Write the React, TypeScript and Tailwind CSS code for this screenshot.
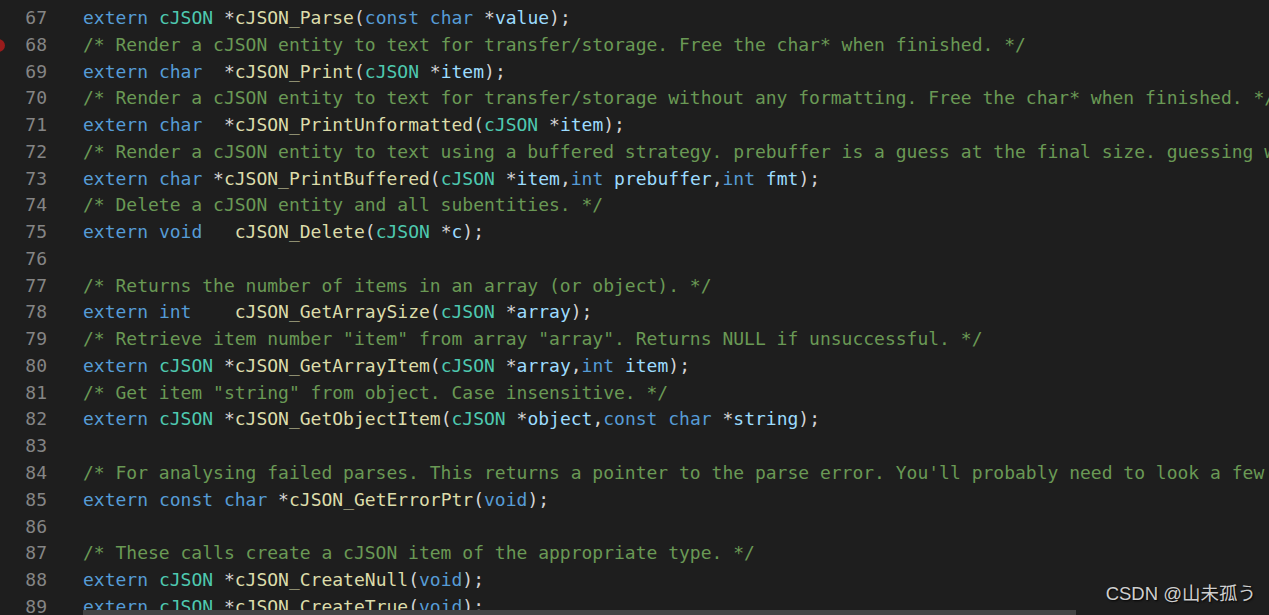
import React from "react";

type Tok = [string, string];

const K = "text-[#569cd6]";
const T = "text-[#4ec9b0]";
const F = "text-[#dcdcaa]";
const P = "text-[#9cdcfe]";
const C = "text-[#6a9955]";
const O = "text-[#d4d4d4]";

const lines: { n: number; toks: Tok[] }[] = [
  { n: 67, toks: [[K, "extern"], [O, " "], [T, "cJSON"], [O, " *"], [F, "cJSON_Parse"], [O, "("], [K, "const"], [O, " "], [K, "char"], [O, " *"], [P, "value"], [O, ");"]] },
  { n: 68, toks: [[C, "/* Render a cJSON entity to text for transfer/storage. Free the char* when finished. */"]] },
  { n: 69, toks: [[K, "extern"], [O, " "], [K, "char"], [O, "  *"], [F, "cJSON_Print"], [O, "("], [T, "cJSON"], [O, " *"], [P, "item"], [O, ");"]] },
  { n: 70, toks: [[C, "/* Render a cJSON entity to text for transfer/storage without any formatting. Free the char* when finished. */"]] },
  { n: 71, toks: [[K, "extern"], [O, " "], [K, "char"], [O, "  *"], [F, "cJSON_PrintUnformatted"], [O, "("], [T, "cJSON"], [O, " *"], [P, "item"], [O, ");"]] },
  { n: 72, toks: [[C, "/* Render a cJSON entity to text using a buffered strategy. prebuffer is a guess at the final size. guessing well reduces reallocation. fmt=0 gives unformatted, =1 gives formatted */"]] },
  { n: 73, toks: [[K, "extern"], [O, " "], [K, "char"], [O, " *"], [F, "cJSON_PrintBuffered"], [O, "("], [T, "cJSON"], [O, " *"], [P, "item"], [O, ","], [K, "int"], [O, " "], [P, "prebuffer"], [O, ","], [K, "int"], [O, " "], [P, "fmt"], [O, ");"]] },
  { n: 74, toks: [[C, "/* Delete a cJSON entity and all subentities. */"]] },
  { n: 75, toks: [[K, "extern"], [O, " "], [K, "void"], [O, "   "], [F, "cJSON_Delete"], [O, "("], [T, "cJSON"], [O, " *"], [P, "c"], [O, ");"]] },
  { n: 76, toks: [] },
  { n: 77, toks: [[C, "/* Returns the number of items in an array (or object). */"]] },
  { n: 78, toks: [[K, "extern"], [O, " "], [K, "int"], [O, "    "], [F, "cJSON_GetArraySize"], [O, "("], [T, "cJSON"], [O, " *"], [P, "array"], [O, ");"]] },
  { n: 79, toks: [[C, "/* Retrieve item number \"item\" from array \"array\". Returns NULL if unsuccessful. */"]] },
  { n: 80, toks: [[K, "extern"], [O, " "], [T, "cJSON"], [O, " *"], [F, "cJSON_GetArrayItem"], [O, "("], [T, "cJSON"], [O, " *"], [P, "array"], [O, ","], [K, "int"], [O, " "], [P, "item"], [O, ");"]] },
  { n: 81, toks: [[C, "/* Get item \"string\" from object. Case insensitive. */"]] },
  { n: 82, toks: [[K, "extern"], [O, " "], [T, "cJSON"], [O, " *"], [F, "cJSON_GetObjectItem"], [O, "("], [T, "cJSON"], [O, " *"], [P, "object"], [O, ","], [K, "const"], [O, " "], [K, "char"], [O, " *"], [P, "string"], [O, ");"]] },
  { n: 83, toks: [] },
  { n: 84, toks: [[C, "/* For analysing failed parses. This returns a pointer to the parse error. You'll probably need to look a few chars back to make sense of it. Defined when cJSON_Parse() returns 0. 0 when cJSON_Parse() succeeds. */"]] },
  { n: 85, toks: [[K, "extern"], [O, " "], [K, "const"], [O, " "], [K, "char"], [O, " *"], [F, "cJSON_GetErrorPtr"], [O, "("], [K, "void"], [O, ");"]] },
  { n: 86, toks: [] },
  { n: 87, toks: [[C, "/* These calls create a cJSON item of the appropriate type. */"]] },
  { n: 88, toks: [[K, "extern"], [O, " "], [T, "cJSON"], [O, " *"], [F, "cJSON_CreateNull"], [O, "("], [K, "void"], [O, ");"]] },
  { n: 89, toks: [[K, "extern"], [O, " "], [T, "cJSON"], [O, " *"], [F, "cJSON_CreateTrue"], [O, "("], [K, "void"], [O, ");"]] },
];

export default function App() {
  return (
    <div className="relative w-[1269px] h-[615px] overflow-hidden bg-[#1e1e1e] font-['DejaVu_Sans_Mono',monospace] text-[18px]">
      <div className="flex flex-col pt-[5px]">
        {lines.map((l) => (
          <div key={l.n} className="relative flex h-[26.77px] leading-[26.77px] whitespace-pre">
            {l.n === 68 && (
              <div className="absolute left-[-8px] top-[7px] w-[13px] h-[13px] rounded-full bg-[#9a1c1c]" />
            )}
            <div className="w-[47px] shrink-0 text-right text-[#858585]">{l.n}</div>
            <div className="ml-[36px] shrink-0">
              {l.toks.map((t, i) => (
                <span key={i} className={t[0]}>
                  {t[1]}
                </span>
              ))}
            </div>
          </div>
        ))}
      </div>
      <div className="absolute left-[83px] bottom-0 w-[993px] h-[5px] bg-[#434343]" />
      <div className="absolute right-[13px] top-[580px] font-['Liberation_Sans','Noto_Sans_CJK_SC',sans-serif] text-[18.5px] leading-[28px] text-[#cfcfcf] [text-shadow:1px_1px_2px_rgba(0,0,0,0.9)]">
        CSDN @山未孤う
      </div>
    </div>
  );
}
